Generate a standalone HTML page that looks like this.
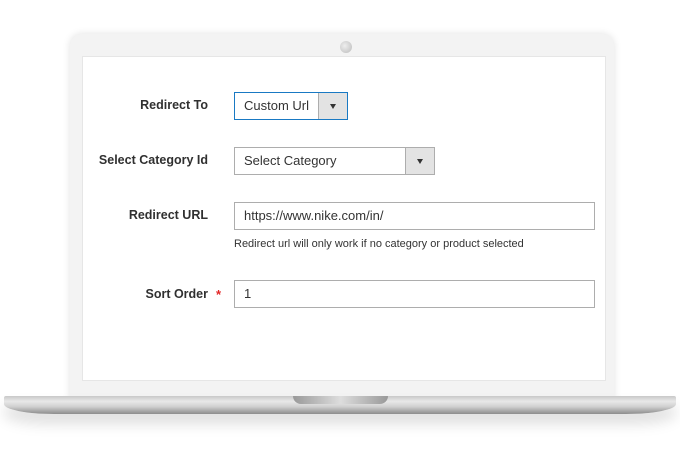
<!DOCTYPE html>
<html><head><style>
*{margin:0;padding:0;box-sizing:border-box}
body{width:680px;height:450px;background:#fff;position:relative;overflow:hidden;font-family:"Liberation Sans",sans-serif}
.lid{position:absolute;left:70px;top:34px;width:544px;height:366px;background:#f3f3f3;border-radius:12px 12px 0 0;box-shadow:0 0 8px rgba(0,0,0,.12)}
.cam{position:absolute;left:340px;top:41px;width:12px;height:12px;border-radius:50%;background:radial-gradient(circle at 40% 40%,#eee,#bbb)}
.screen{position:absolute;left:82px;top:56px;width:524px;height:325px;background:#fff;border:1px solid #e6e6e6}
.base{position:absolute;left:4px;top:396px;width:672px;height:18px;background:linear-gradient(#c8c8c8,#e8e8e8 30%,#cfcfcf 60%,#b5b5b5 75%,#8d8d8d);border-radius:2px 2px 50px 50px/2px 2px 10px 10px;box-shadow:0 10px 14px rgba(0,0,0,.13)}
.notch{position:absolute;left:293px;top:396px;width:95px;height:8px;background:linear-gradient(90deg,#999,#ddd 50%,#999);border-radius:0 0 8px 8px}
.lbl{position:absolute;font-weight:bold;font-size:12.5px;color:#303030;text-align:right;width:200px;left:8px}
.inp{position:absolute;border:1px solid #adadad;background:#fff;font-size:13px;color:#333;padding-left:9px;line-height:26px;height:28px}
.arr{position:absolute;right:0;top:0;width:29px;height:26px;background:#e3e3e3;border-left:1px solid #adadad}
.arr:after{content:"";position:absolute;left:11px;top:11px;border-left:3.5px solid transparent;border-right:3.5px solid transparent;border-top:5px solid #333}
.note{position:absolute;left:234px;top:238px;font-size:11px;color:#333;width:290px;white-space:nowrap;overflow:hidden}
</style></head><body>
<div class="lid"></div>
<div class="cam"></div>
<div class="screen"></div>
<div class="base"></div>
<div class="notch"></div>
<div class="lbl" style="top:98px">Redirect To</div>
<div class="inp" style="left:234px;top:92px;width:114px;border-color:#1979c3">Custom Url<div class="arr"></div></div>
<div class="lbl" style="top:153px">Select Category Id</div>
<div class="inp" style="left:234px;top:147px;width:201px">Select Category<div class="arr"></div></div>
<div class="lbl" style="top:208px">Redirect URL</div>
<div class="inp" style="left:234px;top:202px;width:361px">https://www.nike.com/in/</div>
<div class="note">Redirect url will only work if no category or product selected</div>
<div class="lbl" style="top:287px">Sort Order</div>
<div style="position:absolute;left:216px;top:287px;color:#e22626;font-size:13px;font-weight:bold">*</div>
<div class="inp" style="left:234px;top:280px;width:361px">1</div>
</body></html>
